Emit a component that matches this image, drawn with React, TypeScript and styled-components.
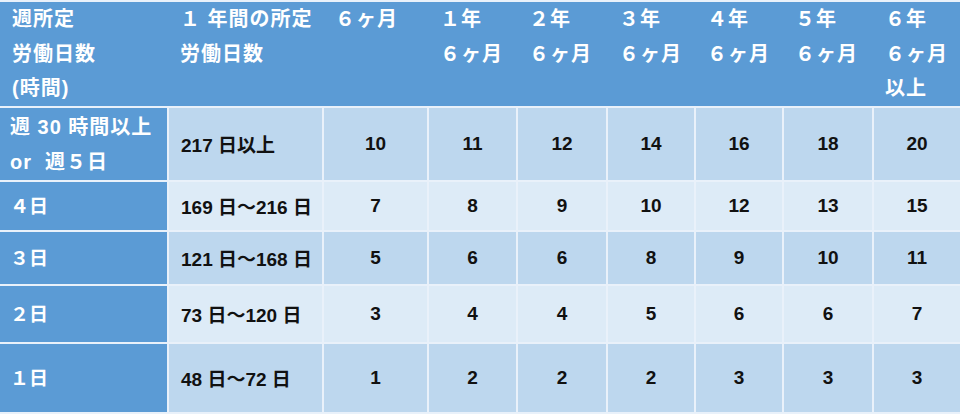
import { createGlobalStyle, styled } from "styled-components";

const GlobalStyle = createGlobalStyle`
  html, body {
    margin: 0;
    padding: 0;
    background: #ffffff;
  }
  body {
    font-family: "Liberation Sans", "Noto Sans CJK JP", sans-serif;
  }
`;

const Table = styled.table`
  width: 960px;
  border-collapse: collapse;
  table-layout: fixed;
  font-weight: 700;
  border-top: 2px solid #e9f1fa;
  border-bottom: 2px solid #e9f1fa;
`;

const HeadRow = styled.tr`
  height: 104px;
  background: #5b9bd5;
`;

const HeadCell = styled.th`
  padding: 0 12px;
  vertical-align: top;
  text-align: left;
  color: #ffffff;
  font-size: 20px;
  letter-spacing: 1px;
  font-weight: 700;
  line-height: 34.5px;
  white-space: nowrap;
`;

const BodyRow = styled.tr<{ $h: number; $shade: boolean }>`
  height: ${(p) => p.$h}px;
  background: ${(p) => (p.$shade ? "#bdd7ee" : "#ddebf7")};
`;

const LabelCell = styled.td<{ $wide: boolean }>`
  background: #5b9bd5;
  color: #ffffff;
  font-size: ${(p) => (p.$wide ? "20px" : "19px")};
  letter-spacing: ${(p) => (p.$wide ? "1px" : "0")};
  line-height: 35px;
  padding: 2px 10px 0;
  border: 2px solid #e9f1fa;
  border-left: none;
  white-space: pre;
`;

const RangeCell = styled.td`
  color: #111111;
  font-size: 19px;
  padding: 0 12px;
  border: 2px solid #e9f1fa;
  white-space: nowrap;
`;

const NumCell = styled.td`
  color: #111111;
  font-size: 19px;
  text-align: center;
  border: 2px solid #e9f1fa;
  &:last-child {
    border-right: none;
  }
`;

const widths = [168, 155, 105, 89, 90, 88, 88, 90, 87];

const heads: string[][] = [
  ["週所定", "労働日数", "(時間)"],
  ["１ 年間の所定", "労働日数"],
  ["６ヶ月"],
  ["１年", "６ヶ月"],
  ["２年", "６ヶ月"],
  ["３年", "６ヶ月"],
  ["４年", "６ヶ月"],
  ["５年", "６ヶ月"],
  ["６年", "６ヶ月", "以上"],
];

type Row = { label: string[]; range: string; days: number[]; h: number };

const rows: Row[] = [
  { label: ["週 30 時間以上", "or  週５日"], range: "217 日以上", days: [10, 11, 12, 14, 16, 18, 20], h: 74 },
  { label: ["４日"], range: "169 日～216 日", days: [7, 8, 9, 10, 12, 13, 15], h: 50 },
  { label: ["３日"], range: "121 日～168 日", days: [5, 6, 6, 8, 9, 10, 11], h: 54 },
  { label: ["２日"], range: "73 日～120 日", days: [3, 4, 4, 5, 6, 6, 7], h: 58 },
  { label: ["１日"], range: "48 日～72 日", days: [1, 2, 2, 2, 3, 3, 3], h: 70 },
];

const App = () => {
  return (
    <>
      <GlobalStyle />
      <Table>
        <colgroup>
          {widths.map((w, i) => (
            <col key={i} style={{ width: w }} />
          ))}
        </colgroup>
        <thead>
          <HeadRow>
            {heads.map((lines, i) => (
              <HeadCell key={i}>
                {lines.map((l, j) => (
                  <div key={j}>{l}</div>
                ))}
              </HeadCell>
            ))}
          </HeadRow>
        </thead>
        <tbody>
          {rows.map((r, i) => (
            <BodyRow key={i} $h={r.h} $shade={i % 2 === 0}>
              <LabelCell $wide={r.label.length > 1}>
                {r.label.map((l, j) => (
                  <div key={j}>{l}</div>
                ))}
              </LabelCell>
              <RangeCell>{r.range}</RangeCell>
              {r.days.map((d, j) => (
                <NumCell key={j}>{d}</NumCell>
              ))}
            </BodyRow>
          ))}
        </tbody>
      </Table>
    </>
  );
};

export default App;
